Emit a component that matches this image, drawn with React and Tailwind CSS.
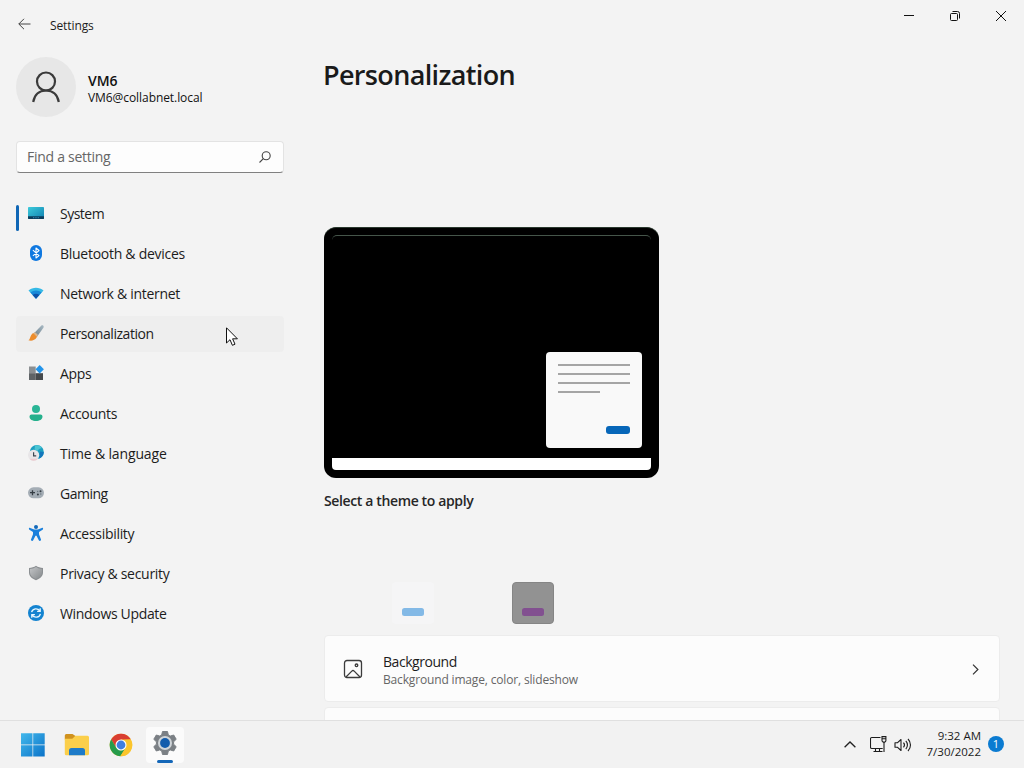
import { useState } from "react"

function SystemIcon() {
  return (
    <svg width="16" height="16" viewBox="0 0 16 16">
      <defs>
        <linearGradient id="sys" x1="0" y1="0" x2="1" y2="1">
          <stop offset="0" stopColor="#3ccbdb" />
          <stop offset="1" stopColor="#0f7fb0" />
        </linearGradient>
      </defs>
      <rect x="0" y="2" width="16" height="12" rx="0.8" fill="url(#sys)" />
      <path d="M0 11.3h16v1.9a.8.8 0 0 1-.8.8H.8a.8.8 0 0 1-.8-.8z" fill="#0b3c5c" />
      <path d="M5 12.7h6" stroke="#3b9ccb" strokeWidth="0.8" strokeDasharray="1 0.7" />
    </svg>
  )
}

function BluetoothIcon() {
  return (
    <svg width="16" height="16" viewBox="0 0 16 16">
      <rect x="2" y="0" width="12" height="16" rx="6" fill="#0f78e0" />
      <path d="M4.9 5.2 11 10.6 8 13V3l3 2.5-6.1 5.3" fill="none" stroke="#fff" strokeWidth="1.1" strokeLinejoin="round" />
    </svg>
  )
}

function NetworkIcon() {
  return (
    <svg width="16" height="16" viewBox="0 0 16 16">
      <path d="M.5 5.6C4.7 1.9 11.3 1.9 15.5 5.6L8 13.8z" fill="#35b9e6" />
      <path d="M2.4 7.6C5.6 4.9 10.4 4.9 13.6 7.6L8 13.8z" fill="#1889d8" />
      <path d="M4.6 10C6.5 8.3 9.5 8.3 11.4 10L8 13.8z" fill="#0d52a8" />
    </svg>
  )
}

function BrushIcon() {
  return (
    <svg width="16" height="16" viewBox="0 0 16 16">
      <defs>
        <linearGradient id="brush" x1="0" y1="1" x2="1" y2="0">
          <stop offset="0" stopColor="#6b7f8c" />
          <stop offset="1" stopColor="#a9bac4" />
        </linearGradient>
      </defs>
      <path d="M5.8 8.4 13.2.7C14.7-.4 16.4 1 15.4 2.8L9.2 11.4z" fill="url(#brush)" />
      <path d="M.4 15.3C2.2 14.1 1.8 12.5 3 10.4 4 8.4 5.6 7.6 6.8 8.1 9 9 9.7 10.8 8.6 12.6 6.8 15.6 3.2 16.2.4 15.3z" fill="#ec8c2c" />
      <path d="M5.4 8.2 6.9 6.9 10.1 9.9 8.800 11.8z" fill="#d9b48a" />
    </svg>
  )
}

function AppsIcon() {
  return (
    <svg width="16" height="16" viewBox="0 0 16 16">
      <rect x="1" y="1.5" width="6.7" height="6.7" fill="#8b8f92" />
      <rect x="1" y="8.2" width="6.7" height="6.8" fill="#5f6366" />
      <rect x="7.7" y="8.2" width="7.3" height="6.8" fill="#45494c" />
      <path d="M11.7.1 15.900 4.3 11.7 8.5 7.5 4.3z" fill="#2294ea" />
    </svg>
  )
}

function AccountsIcon() {
  return (
    <svg width="16" height="16" viewBox="0 0 16 16">
      <circle cx="8" cy="4" r="4" fill="#2ab596" />
      <path d="M3.500 9.500h9a2 2 0 0 1 2 2C14.500 14.500 11.500 16 8 16s-6.500-1.500-6.500-4.500a2 2 0 0 1 2-2z" fill="#24b08c" />
    </svg>
  )
}

function TimeIcon() {
  return (
    <svg width="16" height="16" viewBox="0 0 16 16">
      <circle cx="8.8" cy="7" r="7" fill="#1b9fc0" />
      <path d="M7 .5c3-1 6 .3 7 2.5l-3 1-1.500 2-3-1.500z" fill="#4cc4d2" />
      <path d="M12 6.5 15.8 7c0 3-2 5.600-4.600 6.600z" fill="#1376bb" />
      <circle cx="5.600" cy="10.300" r="5.600" fill="#e8e6e8" />
      <path d="M1.500 13.800a5.600 5.600 0 0 0 8.400 0z" fill="#eccbd0" />
      <path d="M5.600 7.200v3.600h2.600" fill="none" stroke="#3c4650" strokeWidth="1.2" />
    </svg>
  )
}

function GamingIcon() {
  return (
    <svg width="16" height="16" viewBox="0 0 16 16">
      <rect x="0" y="2.300" width="16" height="11" rx="5.500" fill="#a4adb5" />
      <path d="M4.500 5.200v5M2 7.700h5" stroke="#353d44" strokeWidth="1.3" />
      <circle cx="9.900" cy="9.500" r="1" fill="#353d44" />
      <circle cx="12.500" cy="6.200" r="1" fill="#353d44" />
      <circle cx="12.800" cy="9" r=".7" fill="#66727c" />
      <circle cx="9.700" cy="6.500" r=".7" fill="#66727c" />
    </svg>
  )
}

function AccessibilityIcon() {
  return (
    <svg width="16" height="16" viewBox="0 0 16 16">
      <circle cx="8" cy="2" r="2" fill="#1469ba" />
      <path d="M2.200 2.900 6.200 4.600h3.600l4-1.700c1.200-.4 1.800 1.200.8 1.800L11 7v2.300l2 5.200c.4 1.400-1.600 2.100-2.200.8L8.500 10.800h-1l-2.300 4.500c-.6 1.300-2.600.6-2.200-.8l2-5.200V7L1.400 4.700c-1-.6-.4-2.200.8-1.800z" fill="#1a80dc" />
    </svg>
  )
}

function ShieldIcon() {
  return (
    <svg width="16" height="16" viewBox="0 0 16 16">
      <defs>
        <linearGradient id="shield" x1="0" y1="0" x2="1" y2="1">
          <stop offset="0" stopColor="#c3c5c7" />
          <stop offset="1" stopColor="#85898c" />
        </linearGradient>
      </defs>
      <path d="M8 .700C10 2.200 12.400 2.800 15 2.900V7.500c0 3.500-2.600 6-7 7.700C3.600 13.500 1 11 1 7.500V2.900C3.600 2.800 6 2.200 8 .700z" fill="#8b8f92" />
      <path d="M8 1.900C9.800 3.200 11.800 3.700 14 3.900V7.500C14 10.500 11.600 12.500 8 14 4.400 12.500 2 10.500 2 7.500V3.900C4.200 3.700 6.200 3.200 8 1.900z" fill="url(#shield)" />
    </svg>
  )
}

function UpdateIcon() {
  return (
    <svg width="16" height="16" viewBox="0 0 16 16">
      <circle cx="8" cy="8" r="8" fill="#1383d0" />
      <path d="M3.600 7.200C4.600 3.200 9.600 2.700 11.900 5.900M12.200 3.200v3.100H9.100M12.400 8.800C11.400 12.800 6.400 13.300 4.100 10.100M3.800 12.800V9.700h3.100" fill="none" stroke="#e8f7ff" strokeWidth="1.3" />
    </svg>
  )
}

const navItems = [
  { label: "System", icon: SystemIcon, tracking: "tracking-[-0.5px]" },
  { label: "Bluetooth & devices", icon: BluetoothIcon, tracking: "tracking-[-0.27px]" },
  { label: "Network & internet", icon: NetworkIcon, tracking: "tracking-[-0.3px]" },
  { label: "Personalization", icon: BrushIcon, tracking: "tracking-[-0.45px]" },
  { label: "Apps", icon: AppsIcon, tracking: "tracking-[-0.3px]" },
  { label: "Accounts", icon: AccountsIcon, tracking: "tracking-[-0.3px]" },
  { label: "Time & language", icon: TimeIcon, tracking: "tracking-[-0.15px]" },
  { label: "Gaming", icon: GamingIcon, tracking: "tracking-[-0.5px]" },
  { label: "Accessibility", icon: AccessibilityIcon, tracking: "tracking-[-0.3px]" },
  { label: "Privacy & security", icon: ShieldIcon, tracking: "tracking-[-0.29px]" },
  { label: "Windows Update", icon: UpdateIcon, tracking: "tracking-[-0.33px]" },
]

function TitleBar() {
  return (
    <header className="flex h-12 justify-between">
      <div className="flex items-center pl-[18px]">
        <svg width="13" height="12" viewBox="0 0 13 12" fill="none" stroke="#444">
          <path d="M6 .8.8 6 6 11.2M.8 6h11.700" />
        </svg>
        <span className="mt-[3px] ml-[19px] text-[12px] leading-4 tracking-[-0.1px] text-[#1c1c1c]">Settings</span>
      </div>
      <div className="flex h-8">
        <button className="flex w-[46px] items-center justify-center">
          <svg width="10" height="10" viewBox="0 0 10 10"><path d="M0 4.500h10" stroke="#111" /></svg>
        </button>
        <button className="flex w-[46px] items-center justify-center">
          <svg width="10" height="10" viewBox="0 0 10 10" fill="none" stroke="#111">
            <rect x=".5" y="2.500" width="7" height="7" rx="1" />
            <path d="M2.500.5H7.500a2 2 0 0 1 2 2v5" />
          </svg>
        </button>
        <button className="flex w-[46px] items-center justify-center">
          <svg width="10" height="10" viewBox="0 0 10 10"><path d="M0 0l10 10M10 0 0 10" stroke="#111" /></svg>
        </button>
      </div>
    </header>
  )
}

function Sidebar({ hovered, setHovered }) {
  return (
    <aside className="w-[300px] shrink-0 px-4 pt-[9px]">
      <div className="flex h-[60px] items-center">
        <div className="flex size-[60px] items-center justify-center rounded-full bg-[#e7e7e7]">
          <svg width="28" height="32" viewBox="0 0 28 32" fill="none" stroke="#3a3a3a" strokeWidth="2.2">
            <circle cx="14" cy="10.500" r="9" />
            <path d="M1.200 31C2.500 23.500 7.500 19.500 14 19.500S25.500 23.500 26.800 31" />
          </svg>
        </div>
        <div className="ml-3 pt-[3px]">
          <p className="text-[14px] leading-[19px] font-semibold text-[#111]">VM6</p>
          <p className="text-[12px] leading-4 tracking-[-0.07px] text-[#111]">VM6@collabnet.local</p>
        </div>
      </div>
      <div className="mt-6 flex h-8 items-center justify-between rounded-[4px] border border-[#e3e3e3] border-b-[#808080] bg-[#fdfdfd] pr-3 pl-2.5">
        <span className="mb-px text-[14px] tracking-[-0.28px] text-[#666]">Find a setting</span>
        <svg width="12" height="12" viewBox="0 0 12 12" fill="none" stroke="#444" strokeWidth="1.1">
          <circle cx="7.200" cy="4.800" r="4" />
          <path d="M4.300 7.700.500 11.500" />
        </svg>
      </div>
      <nav className="mt-[23px] flex flex-col gap-1">
        {navItems.map(({ label, icon: Icon, tracking }, i) => (
          <a
            key={label}
            onMouseEnter={() => setHovered(label)}
            className={`relative flex h-9 items-center rounded-[4px] pl-3 ${hovered === label ? "bg-[#eeeeee]" : ""}`}
          >
            {i === 0 && <span className="absolute top-[9px] left-0 h-[26px] w-[3px] rounded-full bg-[#0f66b5]" />}
            <span className="mb-[2px]"><Icon /></span>
            <span className={`mb-[2px] ml-4 text-[14px] text-[#1c1c1c] ${tracking}`}>{label}</span>
          </a>
        ))}
      </nav>
    </aside>
  )
}

function ThemePreview() {
  return (
    <div className="flex h-[251px] w-[335px] flex-col rounded-[12px] border-t border-[#29382d] bg-black px-2 pt-[7px] pb-2">
      <div className="flex flex-1 flex-col items-end rounded-t-[5px] border-t border-[#45554a] pr-[9px] pt-[116px]">
        <div className="flex h-24 w-24 shrink-0 flex-col gap-[7px] rounded-[4px] bg-[#f9f9f9] px-3 pt-3">
          <div className="h-[2px] w-[72px] shrink-0 bg-[#a5a5a5]" />
          <div className="h-[2px] w-[72px] shrink-0 bg-[#a5a5a5]" />
          <div className="h-[2px] w-[72px] shrink-0 bg-[#a5a5a5]" />
          <div className="h-[2px] w-[42px] shrink-0 bg-[#a5a5a5]" />
          <div className="mt-[26px] h-2 w-6 shrink-0 self-end rounded-[3px] bg-[#0767b9]" />
        </div>
      </div>
      <div className="h-3 rounded-b-[4px] bg-white" />
    </div>
  )
}

function SettingsCard() {
  return (
    <div className="flex h-[67px] items-center rounded-[4px] border border-[#ececec] bg-[#fcfcfc] pt-px pr-5 pl-[18px]">
      <svg width="20" height="20" viewBox="0 0 20 20" fill="none" stroke="#3c3c3c" strokeWidth="1.3">
        <rect x="1.500" y="1.500" width="17" height="17" rx="2.500" />
        <path d="M3 18 8.800 12.100a1.700 1.700 0 0 1 2.400 0L17 18" />
        <circle cx="13.500" cy="6.300" r="1.300" />
      </svg>
      <div className="mt-px ml-5 flex-1">
        <p className="text-[14px] leading-5 tracking-[-0.45px] text-[#1c1c1c]">Background</p>
        <p className="text-[12px] leading-[15px] tracking-[-0.16px] text-[#666]">Background image, color, slideshow</p>
      </div>
      <svg width="7" height="11" viewBox="0 0 7 11" fill="none" stroke="#333" strokeWidth="1.2">
        <path d="M1 .6 5.900 5.500 1 10.400" />
      </svg>
    </div>
  )
}

function Content() {
  return (
    <main className="flex-1 overflow-hidden pr-6 pl-6">
      <h1 className="mt-[7px] -ml-px text-[27px] leading-10 font-semibold tracking-[-0.65px] text-[#1a1a1a]">Personalization</h1>
      <div className="mt-[132px]"><ThemePreview /></div>
      <h2 className="mt-[13px] text-[14px] leading-5 font-semibold tracking-[-0.37px] text-[#262626]">Select a theme to apply</h2>
      <div className="mt-[71px] flex gap-[78px] pl-[68px]">
        <div className="flex h-[42px] w-[42px] items-end justify-center rounded-[4px] bg-[#f5f5f6] pb-2">
          <div className="h-2 w-[22px] rounded-[2.5px] bg-[#83b9e6]" />
        </div>
        <div className="flex h-[42px] w-[42px] items-end justify-center rounded-[4px] border border-[#858585] bg-[#929292] pb-[7px]">
          <div className="h-2 w-[22px] rounded-[2.5px] bg-[#825090]" />
        </div>
      </div>
      <div className="mt-[11px] flex flex-col gap-[5px]">
        <SettingsCard />
        <div className="h-[60px] rounded-[4px] border border-[#ececec] bg-[#fcfcfc]" />
      </div>
    </main>
  )
}

function Taskbar() {
  return (
    <footer className="flex h-12 items-center justify-between border-t border-[#e0e0e0] bg-[#f2f2f2]">
      <div className="flex h-full items-center">
        <div className="ml-[11px] flex w-11 justify-center">
          <svg width="24" height="24" viewBox="0 0 24 24">
            <defs>
              <linearGradient id="win" x1="0" y1="0" x2="24" y2="24" gradientUnits="userSpaceOnUse">
                <stop offset="0" stopColor="#43b9ec" />
                <stop offset="1" stopColor="#0b72c8" />
              </linearGradient>
            </defs>
            <path d="M0 .2h11.500v11.200H0zM12.200.2h11.500v11.200H12.200zM0 12.200h11.500v11.200H0zM12.200 12.200h11.500v11.200H12.200z" fill="url(#win)" />
          </svg>
        </div>
        <div className="flex w-11 justify-center">
          <svg width="26" height="24" viewBox="0 0 26 24">
            <path d="M.8 2.500a1.500 1.500 0 0 1 1.500-1.500h6.200L11.500 3v3.500H.8z" fill="#d0921f" />
            <path d="M.8 5.800h7.500L11.500 2.800h12A1.500 1.500 0 0 1 25 4.300v16.500a1.500 1.500 0 0 1-1.500 1.500H2.300A1.500 1.500 0 0 1 .8 20.800z" fill="#fbcf4b" />
            <path d="M5 22.300V17.500A2.500 2.500 0 0 1 7.500 15h11a2.500 2.500 0 0 1 2.500 2.500v4.800z" fill="#1e7bc8" />
          </svg>
        </div>
        <div className="flex w-11 justify-center">
          <svg width="24" height="24" viewBox="0 0 24 24">
            <circle cx="12" cy="12" r="11.300" fill="#fbc52c" />
            <path d="M2.200 6.300A11.300 11.300 0 0 1 21.800 6.300L12 6.700 7.100 14.800z" fill="#d93e31" />
            <path d="M2.200 6.300 7.200 14.800 12 17.400 16.700 14.700 11.300 23.300A11.300 11.300 0 0 1 2.200 6.300z" fill="#269b4b" />
            <path d="M12 6.700h9.800a11.300 11.300 0 0 1-10.500 16.600l5.500-8.600z" fill="#fbc52c" />
            <circle cx="12" cy="12" r="5.500" fill="#fff" />
            <circle cx="12" cy="12" r="4.400" fill="#3f7fe0" />
          </svg>
        </div>
        <div className="relative ml-[3px] flex h-9 w-[38px] items-center justify-center rounded-[4px] bg-[#fbfbfb] pb-[3px]">
          <svg width="26" height="26" viewBox="0 0 26 26">
            <path d="M10.500 1.500h5l.8 3.500 1.900 1.100 3.500-1.100 2.500 4.300-2.600 2.500v2.400l2.600 2.500-2.500 4.300-3.500-1.100-1.900 1.100-.8 3.500h-5L9.700 21l-1.900-1.100L4.300 21l-2.500-4.300 2.600-2.500v-2.400L1.800 9.300 4.300 5l3.500 1.100L9.700 5z" fill="#7b8085" stroke="#7b8085" strokeLinejoin="round" />
            <circle cx="13" cy="13" r="7" fill="#d0d5d9" />
            <circle cx="13" cy="13" r="4.900" fill="#135cac" />
          </svg>
          <span className="absolute bottom-0 left-[11px] h-[3px] w-4 rounded-full bg-[#1467b8]" />
        </div>
      </div>
      <div className="flex items-center">
        <svg width="12" height="7" viewBox="0 0 12 7" fill="none" stroke="#222" strokeWidth="1.3"><path d="M.6 6.300 6 1l5.400 5.300" /></svg>
        <svg className="ml-[14px]" width="17" height="17" viewBox="0 0 17 17" fill="none" stroke="#1c1c1c" strokeWidth="1.100">
          <path d="M10.500 1.500H1.700A1.200 1.200 0 0 0 .5 2.700v8.600a1.200 1.200 0 0 0 1.200 1.200h11M3.500 15.500h9M5.500 12.500v3M9.500 12.500v3M14 6v10" />
          <path d="M12 .6h3.900v4a1.500 1.500 0 0 1-1.500 1.500h-.9a1.500 1.500 0 0 1-1.500-1.500zM12 2.700h3.900" />
        </svg>
        <svg className="ml-[7px]" width="18" height="14" viewBox="0 0 18 14" fill="none" stroke="#1c1c1c" strokeWidth="1.100">
          <path d="M1 4.800h2.300L7 1.500v11L3.300 9.200H1z" strokeLinejoin="round" />
          <path d="M9.500 4.700a3.500 3.500 0 0 1 0 4.600M11.800 2.900a6 6 0 0 1 0 8.200M14 1a8.500 8.500 0 0 1 0 12" />
        </svg>
        <div className="mb-[2px] ml-[11px] w-[58px] text-right text-[11.500px] leading-4 whitespace-nowrap text-[#1c1c1c]">
          <p>9:32 AM</p>
          <p>7/30/2022</p>
        </div>
        <div className="mr-5 mb-px ml-[7px] flex size-4 items-center justify-center rounded-full bg-[#0b7bd1] text-[11px] text-white">1</div>
      </div>
    </footer>
  )
}

export default function App() {
  const [hovered, setHovered] = useState("Personalization")

  return (
    <div className="relative flex h-[768px] w-[1024px] flex-col overflow-hidden bg-[#f3f3f3] font-['Open_Sans','Noto_Sans',sans-serif]">
      <TitleBar />
      <div className="flex min-h-0 flex-1 overflow-hidden">
        <Sidebar hovered={hovered} setHovered={setHovered} />
        <Content />
      </div>
      <Taskbar />
      <svg className="absolute top-[327px] left-[226px]" width="13" height="20" viewBox="0 0 13 20">
        <path d="M.5.8v15.200l3.500-3.300 2.400 5.600 2.600-1.100-2.400-5.400h4.800z" fill="#fff" stroke="#111" strokeWidth="1" />
      </svg>
    </div>
  )
}
